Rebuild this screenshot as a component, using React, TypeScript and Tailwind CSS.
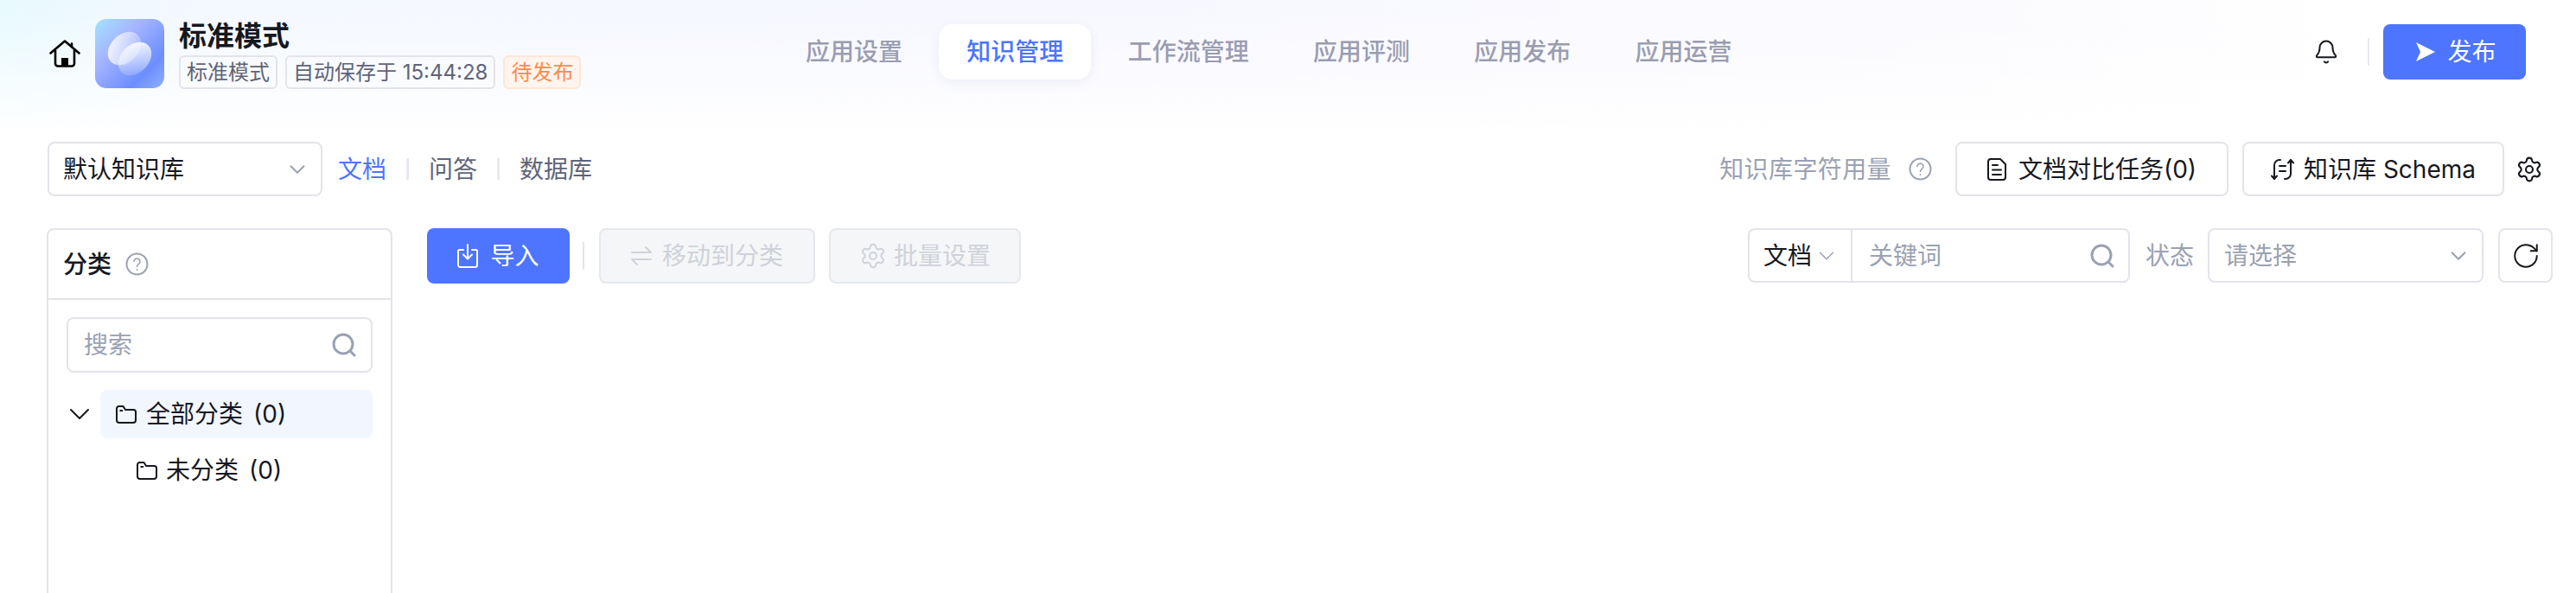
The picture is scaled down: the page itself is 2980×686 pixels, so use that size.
import type { ReactNode } from "react"
import { ChevronDown, RotateCw, Settings, Bell } from "lucide-react"

const border = "border-2 border-[#e3e4ea]"

function HomeIcon() {
  return (
    <svg width="36" height="32" viewBox="0 0 36 32" fill="none" stroke="#000" strokeWidth="2.6" strokeLinejoin="round" strokeLinecap="round">
      <path d="M1.500 15.500 18 1.500l16.500 14" />
      <path d="M26 8V4.500" />
      <path d="M7 12v15.500a3 3 0 0 0 3 3h16a3 3 0 0 0 3-3V12" />
      <rect x="14" y="21" width="8" height="9" fill="#000" stroke="none" />
    </svg>
  )
}

function Logo() {
  return (
    <svg width="80" height="80" viewBox="0 0 80 80" className="shrink-0">
      <defs>
        <linearGradient id="logoBg" x1="0" y1="0" x2="1" y2="1">
          <stop offset="0" stopColor="#a3e3ff" />
          <stop offset="0.35" stopColor="#a5b4ff" />
          <stop offset="0.75" stopColor="#6c8eff" />
          <stop offset="1" stopColor="#8fb0ff" />
        </linearGradient>
        <linearGradient id="logoA" x1="0" y1="1" x2="1" y2="0">
          <stop offset="0.1" stopColor="#fff" stopOpacity="0.85" />
          <stop offset="1" stopColor="#fff" stopOpacity="0.15" />
        </linearGradient>
        <linearGradient id="logoB" x1="0.2" y1="0.1" x2="0.8" y2="1">
          <stop offset="0" stopColor="#fff" stopOpacity="0.85" />
          <stop offset="1" stopColor="#fff" stopOpacity="0.12" />
        </linearGradient>
      </defs>
      <rect width="80" height="80" rx="13" fill="url(#logoBg)" />
      <ellipse cx="34" cy="34" rx="16" ry="22" transform="rotate(45 34 34)" fill="url(#logoA)" />
      <ellipse cx="46" cy="46" rx="16" ry="22" transform="rotate(45 46 46)" fill="url(#logoB)" />
    </svg>
  )
}

function SendIcon() {
  return (
    <svg width="22" height="22" viewBox="0 0 22 22" fill="#fff">
      <path d="M0 0 22 11 0 22 5 11Z" />
    </svg>
  )
}

function HelpIcon() {
  return (
    <svg width="27" height="27" viewBox="0 0 27 27" fill="none" stroke="#9aa1b2" strokeWidth="2">
      <circle cx="13.500" cy="13.500" r="12" />
      <path d="M10 10.500a3.500 3.500 0 1 1 5.500 2.900c-1.300.9-2 1.500-2 3" strokeWidth="1.600" strokeLinecap="round" />
      <circle cx="13.500" cy="20" r="1" fill="#9aa1b2" stroke="none" />
    </svg>
  )
}

function DocIcon() {
  return (
    <svg width="22" height="26" viewBox="0 0 22 26" fill="none" stroke="#16181f" strokeWidth="2" strokeLinejoin="round" strokeLinecap="round">
      <path d="M4 1h11l6 6v15a3 3 0 0 1-3 3H4a3 3 0 0 1-3-3V4a3 3 0 0 1 3-3Z" />
      <path d="M6 8h6M6 13.500h10M6 19h10" />
    </svg>
  )
}

function SchemaIcon() {
  return (
    <svg width="27" height="26" viewBox="0 0 27 26" fill="none" stroke="#16181f" strokeWidth="2" strokeLinecap="round" strokeLinejoin="round">
      <path d="M4 24V8a6 6 0 0 1 6-6h1" />
      <path d="M1 20.500 4 24l3-3.500" />
      <path d="M23 2v16a6 6 0 0 1-6 6h-1" />
      <path d="M20 5.500 23 2l3 3.500" />
      <path d="M10 9h7M10 15h7" />
    </svg>
  )
}

function SearchIcon() {
  return (
    <svg width="28" height="28" viewBox="0 0 28 28" fill="none" stroke="#9aa1b2" strokeWidth="3" strokeLinecap="round">
      <circle cx="13" cy="13" r="11" />
      <path d="m21 21 5 5" />
    </svg>
  )
}

function FolderIcon() {
  return (
    <svg width="24" height="21" viewBox="0 0 24 21" fill="none" stroke="#16181f" strokeWidth="2" strokeLinejoin="round">
      <path d="M1 3.500A2.500 2.500 0 0 1 3.500 1h5l2.500 4h9.500A2.500 2.500 0 0 1 23 7.500V17a3 3 0 0 1-3 3H4a3 3 0 0 1-3-3Z" />
      <path d="M4.500 6h3.500" />
    </svg>
  )
}

function ImportIcon() {
  return (
    <svg width="24" height="28" viewBox="0 0 24 28" fill="none" stroke="#fff" strokeWidth="2" strokeLinecap="round" strokeLinejoin="round">
      <path d="M7 7H2.500A1.500 1.500 0 0 0 1 8.500v16A2.500 2.500 0 0 0 3.500 27h17a2.500 2.500 0 0 0 2.500-2.500v-16A1.500 1.500 0 0 0 21.500 7H17" />
      <path d="M12 1v16M7 12.500l5 5 5-5" />
    </svg>
  )
}

function SwapIcon() {
  return (
    <svg width="24" height="24" viewBox="0 0 24 24" fill="none" stroke="#cfd2da" strokeWidth="2" strokeLinecap="round" strokeLinejoin="round">
      <path d="M1 8h22l-6-6" />
      <path d="M23 16H1l6 6" />
    </svg>
  )
}

function Tag({ className, children }: { className: string; children: ReactNode }) {
  return (
    <span className={`flex h-[39px] items-center rounded-[6px] border-2 px-[7px] text-[24px] ${className}`}>
      {children}
    </span>
  )
}

const tabs = ["应用设置", "知识管理", "工作流管理", "应用评测", "应用发布", "应用运营"]

export default function App() {
  return (
    <div className="flex h-[686px] w-full flex-col overflow-hidden bg-white bg-[linear-gradient(180deg,rgba(255,255,255,0)_0%,rgba(255,255,255,0.15)_25%,#fff_100%),linear-gradient(90deg,#e8faff_0%,#f4f8ff_8%,#f7f7ff_45%,#fbfbff_75%,#fff_92%)] bg-[length:100%_155px] bg-no-repeat font-['Inter','Noto_Sans_CJK_SC',sans-serif] text-[#16181f]">
      <header className="flex h-[120px] shrink-0 items-start pl-[57px] pr-[58px] pt-[20px]">
        <div className="flex w-[843px] items-center">
          <HomeIcon />
          <div className="ml-[17px]">
            <Logo />
          </div>
          <div className="ml-[17px] flex flex-col">
            <div className="mt-[2px] text-[32px] font-semibold leading-[40px]">标准模式</div>
            <div className="mt-[2px] flex gap-[9px]">
              <Tag className="border-[#e3e4ea] text-[#5f6478]">标准模式</Tag>
              <Tag className="border-[#e3e4ea] text-[#5f6478]">自动保存于 15:44:28</Tag>
              <Tag className="border-[#ffe6d4] bg-[#fff5ee] text-[#ff8a4c]">待发布</Tag>
            </div>
          </div>
        </div>

        <nav className="mt-[8px] flex gap-[10.3px]">
          {tabs.map((tab) => (
            <div
              key={tab}
              className={
                tab === "知识管理"
                  ? "flex h-[64px] items-center rounded-[16px] bg-white px-[32px] text-[28px] font-medium text-[#4d75ff] shadow-[0_4px_14px_rgba(80,90,140,0.08)]"
                  : "flex h-[64px] items-center px-[32px] text-[28px] font-medium text-[#9a9db0]"
              }
            >
              {tab}
            </div>
          ))}
        </nav>

        <div className="ml-auto mt-[8px] flex h-[64px] items-center">
          <Bell size={30} strokeWidth={1.6} color="#16181f" />
          <div className="ml-[33px] h-[32px] w-[2px] bg-[#e8e9ee]" />
          <button className="ml-[16px] flex h-[64px] w-[165px] items-center justify-center gap-[14px] rounded-[8px] bg-[#4d75ff] pl-[4px] text-[28px] text-white">
            <SendIcon />
            发布
          </button>
        </div>
      </header>

      <div className="mt-[44px] flex h-[63px] shrink-0 items-center pl-[55px] pr-[38px]">
        <div className={`flex h-[63px] w-[318px] items-center justify-between rounded-[8px] bg-white pl-[16px] pr-[12px] text-[28px] ${border}`}>
          默认知识库
          <ChevronDown size={30} strokeWidth={1.6} color="#9aa1b2" />
        </div>
        <div className="ml-[18px] flex items-center text-[28px] text-[#5f6478]">
          <span className="text-[#4d75ff]">文档</span>
          <div className="mx-[23px] h-[25px] w-[3px] bg-[#e8e9ee]" />
          <span>问答</span>
          <div className="mx-[23px] h-[25px] w-[3px] bg-[#e8e9ee]" />
          <span>数据库</span>
        </div>
        <div className="ml-auto flex items-center">
          <span className="text-[28px] tracking-[0.4px] text-[#9aa1b2]">知识库字符用量</span>
          <div className="ml-[20px]">
            <HelpIcon />
          </div>
          <button className={`ml-[27px] flex h-[63px] w-[316px] items-center justify-center gap-[14px] rounded-[8px] bg-white text-[28px] ${border}`}>
            <DocIcon />
            文档对比任务(0)
          </button>
          <button className={`ml-[16px] flex h-[63px] w-[303px] items-center justify-center gap-[11px] rounded-[8px] bg-white text-[28px] ${border}`}>
            <SchemaIcon />
            知识库 Schema
          </button>
          <Settings className="ml-[13px]" size={32} strokeWidth={1.6} color="#16181f" />
        </div>
      </div>

      <main className="mt-[37px] flex min-h-0 flex-1 pl-[54px] pr-[27px]">
        <aside className={`h-[500px] w-[400px] shrink-0 rounded-t-[8px] bg-white ${border}`}>
          <div className="flex h-[81px] items-center gap-[16px] border-b-2 border-[#e3e4ea] pl-[17px]">
            <span className="text-[28px] font-medium">分类</span>
            <HelpIcon />
          </div>
          <div className="px-[21px] pt-[20px]">
            <div className={`flex h-[64px] items-center justify-between rounded-[8px] pl-[18px] pr-[17px] text-[28px] text-[#9aa1b2] ${border}`}>
              搜索
              <SearchIcon />
            </div>
            <div className="mt-[20px] flex items-center">
              <ChevronDown className="-ml-[5px] shrink-0" size={40} strokeWidth={1.2} color="#16181f" />
              <div className="ml-[4px] flex h-[56px] flex-1 items-center rounded-[8px] bg-[#f2f6ff] pl-[18px] text-[28px]">
                <FolderIcon />
                <span className="ml-[11px]">全部分类</span>
                <span className="ml-[12px]">(0)</span>
              </div>
            </div>
            <div className="mt-[9px] flex h-[56px] items-center pl-[81px] text-[28px]">
              <FolderIcon />
              <span className="ml-[10px]">未分类</span>
              <span className="ml-[12px]">(0)</span>
            </div>
          </div>
        </aside>

        <section className="ml-[40px] flex flex-1 items-start">
          <button className="flex h-[64px] w-[165px] items-center justify-center gap-[14px] rounded-[8px] bg-[#4d75ff] text-[28px] text-white">
            <ImportIcon />
            导入
          </button>
          <div className="ml-[15px] mt-[16px] h-[32px] w-[2px] bg-[#e3e4ea]" />
          <div className="ml-[17px] flex gap-[16px]">
            <button className="flex h-[64px] w-[250px] items-center justify-center gap-[12px] rounded-[8px] border-2 border-[#e6e8ee] bg-[#f5f6f8] text-[28px] text-[#cfd2da]">
              <SwapIcon />
              移动到分类
            </button>
            <button className="flex h-[64px] w-[222px] items-center justify-center gap-[8px] rounded-[8px] border-2 border-[#e6e8ee] bg-[#f5f6f8] text-[28px] text-[#cfd2da]">
              <Settings size={32} strokeWidth={1.5} color="#cfd2da" />
              批量设置
            </button>
          </div>

          <div className="ml-auto flex items-center">
            <div className={`flex h-[63px] w-[442px] items-center rounded-[8px] bg-white ${border}`}>
              <div className="flex h-full w-[119px] items-center border-r-2 border-[#e3e4ea] pl-[16px] text-[28px]">
                文档
                <ChevronDown className="ml-[2px]" size={30} strokeWidth={1.2} color="#9aa1b2" />
              </div>
              <div className="flex flex-1 items-center justify-between pl-[19px] pr-[16px] text-[28px] text-[#9aa1b2]">
                关键词
                <SearchIcon />
              </div>
            </div>
            <span className="ml-[18px] text-[28px] text-[#9aa1b2]">状态</span>
            <div className={`ml-[16px] flex h-[63px] w-[319px] items-center justify-between rounded-[8px] bg-white pl-[17px] pr-[12px] text-[28px] text-[#9aa1b2] ${border}`}>
              请选择
              <ChevronDown size={30} strokeWidth={1.6} color="#9aa1b2" />
            </div>
            <button className={`ml-[17px] flex h-[63px] w-[63px] items-center justify-center rounded-[8px] bg-white ${border}`}>
              <RotateCw size={34} strokeWidth={1.4} color="#16181f" />
            </button>
          </div>
        </section>
      </main>
    </div>
  )
}
